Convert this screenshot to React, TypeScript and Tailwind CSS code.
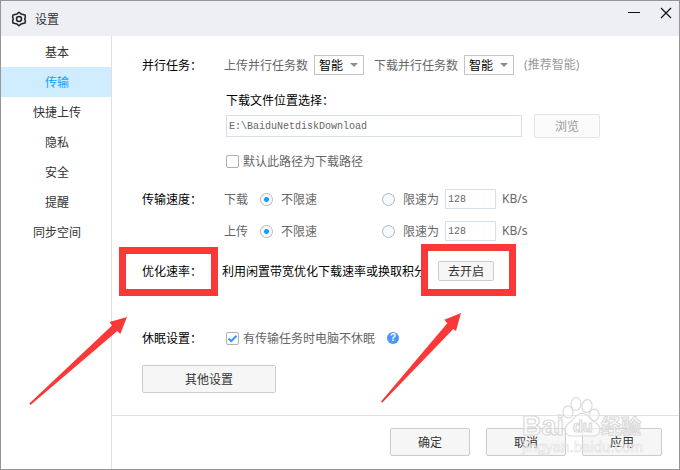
import { useState, type ReactNode } from "react";

const tabs = ["基本", "传输", "快捷上传", "隐私", "安全", "提醒", "同步空间"];

function GearIcon() {
  return (
    <svg viewBox="0 0 16 16" className="size-4" fill="none" stroke="#222" strokeWidth="1.5" strokeLinejoin="round">
      <path d="M8 1.2 L10 2.9 L14 3.9 L14.4 6 L13.7 8 L14.4 10 L14 12.1 L10 13.1 L8 14.8 L6 13.1 L2 12.1 L1.6 10 L2.3 8 L1.6 6 L2 3.9 L6 2.9 Z" />
      <circle cx="8" cy="8" r="2.5" />
    </svg>
  );
}

function TaskSelect({ id, label }: { id: string; label: string }) {
  return (
    <div className="flex items-center gap-1.5">
      <label htmlFor={id} className="text-[#666]">{label}</label>
      <div className="relative flex">
        <select id={id} className="h-5 w-[50px] appearance-none border border-[#c4c4c4] bg-white pl-1 text-xs leading-4 text-black outline-none">
          <option>智能</option>
          <option>1</option>
          <option>3</option>
          <option>5</option>
        </select>
        <svg viewBox="0 0 8 4" className="pointer-events-none absolute top-2 right-1.5 h-1 w-2">
          <path d="M0 0H8L4 4Z" fill="#8f8f8f" />
        </svg>
      </div>
    </div>
  );
}

function Check({ label, initial }: { label: string; initial: boolean }) {
  const [on, setOn] = useState(initial);
  return (
    <label className="flex items-center gap-1 text-[#666]">
      <span className="relative flex">
        <input
          type="checkbox"
          checked={on}
          onChange={(e) => setOn(e.target.checked)}
          className="size-[13px] appearance-none rounded-xs border border-[#b0b0b0] bg-white"
        />
        {on && (
          <svg viewBox="0 0 13 13" className="pointer-events-none absolute inset-0 size-[13px]" fill="none" stroke="#2b98f5" strokeWidth="2">
            <path d="M2.5 6.5 L5.3 9 L10.5 3.8" />
          </svg>
        )}
      </span>
      {label}
    </label>
  );
}

function Radio({ name, label, checked, onChange }: { name: string; label: string; checked: boolean; onChange: () => void }) {
  return (
    <label className="flex items-center gap-2">
      <input
        type="radio"
        name={name}
        checked={checked}
        onChange={onChange}
        className="size-[13px] appearance-none rounded-full border border-[#b4b8be] bg-[#f6f9fe] bg-[radial-gradient(circle,#0d9ffb_2px,transparent_3px)] not-checked:bg-none"
      />
      {label}
    </label>
  );
}

function SpeedRow({ name, label }: { name: string; label: string }) {
  const [limited, setLimited] = useState(false);
  return (
    <div className="flex h-5 items-center text-[#666]" role="radiogroup" aria-label={label}>
      <span className="w-9 shrink-0">{label}</span>
      <div className="w-[122px] shrink-0">
        <Radio name={name} label="不限速" checked={!limited} onChange={() => setLimited(false)} />
      </div>
      <Radio name={name} label="限速为" checked={limited} onChange={() => setLimited(true)} />
      <input
        aria-label={`${label}限速`}
        defaultValue="128"
        className="ml-1.5 h-5 w-[51px] border border-[#d5dfeb] bg-white px-0.5 font-['Liberation_Mono',monospace] text-[10px] text-[#666] outline-none"
      />
      <span className="ml-1.5 font-['Noto_Sans',sans-serif]">KB/s</span>
    </div>
  );
}

function Row({ label, className, children }: { label: string; className: string; children: ReactNode }) {
  return (
    <div className={`flex ${className}`}>
      <h2 className="w-[82px] shrink-0 leading-5">{label}</h2>
      <div className="min-w-0 grow">{children}</div>
    </div>
  );
}

const button = "rounded-xs border border-[#cccccc] bg-[#f6f6f6] text-[#333]";

function Annotations() {
  return (
    <div className="pointer-events-none absolute -inset-px">
      <div className="absolute top-[247px] left-[119px] h-[49px] w-[99px] border-7 border-[#fb3838]" />
      <div className="absolute top-[244px] left-[421px] h-[52px] w-[95px] border-7 border-[#fb3838]" />
      <svg viewBox="0 0 680 470" className="absolute top-0 left-0 h-[470px] w-[680px]" fill="#fb3838">
        <path d="M127 317 L109.5 322 L112 325.5 L29.3 403.6 L30.5 405 L117.3 331 L120.3 334 Z" />
        <path d="M461 313 L444.3 319.8 L447.3 323.3 L381 401.5 L382.2 402.7 L453.3 329 L456 331 Z" />
      </svg>
    </div>
  );
}

function Watermark() {
  return (
    <div className="pointer-events-none absolute right-[30px] bottom-2 h-[66px] w-[130px]">
      <svg viewBox="0 0 130 66" className="absolute inset-0" fill="#fff" fillOpacity="0.5" stroke="#dadada" strokeWidth="1.2">
        <ellipse cx="49" cy="17" rx="5" ry="6" transform="rotate(-12 49 17)" />
        <ellipse cx="57" cy="9" rx="5" ry="6.5" />
        <ellipse cx="68" cy="11" rx="5" ry="6.5" transform="rotate(12 68 11)" />
        <ellipse cx="75" cy="20" rx="5" ry="6" transform="rotate(20 75 20)" />
        <path d="M63 18.5 C70 18.5 72 25 77 28 C83 32 82 41 74 41 H53 C45 41 44 32 50 28 C55 25 56 18.5 63 18.5 Z" />
        <g fontFamily="Liberation Sans, Noto Sans CJK SC, sans-serif" fontWeight="700">
          <text x="3" y="40" fontSize="27">Bai</text>
          <text x="54" y="37" fontSize="16">du</text>
          <text x="82" y="39" fontSize="20">经验</text>
          <text x="3" y="57" fontSize="15" stroke="#e2e2e2" strokeWidth="0.6" fontWeight="400">jingyan.baidu.com</text>
        </g>
      </svg>
    </div>
  );
}

export default function App() {
  const [tab, setTab] = useState("传输");
  return (
    <div className="relative flex min-h-screen flex-col border border-[#969696] bg-white font-['Noto_Sans_CJK_SC',sans-serif] text-xs text-black">
      <header className="flex h-[35px] items-center bg-[#eeeff5] pl-2.5">
        <GearIcon />
        <h1 className="ml-2 grow text-[#333]">设置</h1>
        <div className="flex gap-5 self-start pt-1.5 pr-[7px]">
          <button aria-label="最小化">
            <svg viewBox="0 0 12 12" className="size-3" stroke="#111"><path d="M0 5.5H12" /></svg>
          </button>
          <button aria-label="关闭">
            <svg viewBox="0 0 12 12" className="size-3" stroke="#111" strokeWidth="1.2"><path d="M1 1L11 11M11 1L1 11" /></svg>
          </button>
        </div>
      </header>
      <div className="flex grow">
        <nav className="flex w-[111px] shrink-0 flex-col border-r border-[#e0e0e0] pt-px">
          {tabs.map((t) => (
            <button
              key={t}
              onClick={() => setTab(t)}
              className={`h-[30px] pl-0.5 ${t === tab ? "bg-[#d0ecff] text-[#0da2ff]" : "text-[#333]"}`}
            >
              {t}
            </button>
          ))}
        </nav>
        <div className="flex min-w-0 grow flex-col">
          <main className="grow pt-[19px] pl-[30px]">
            <Row label="并行任务：" className="">
              <div className="flex items-center gap-2.5">
                <TaskSelect id="up" label="上传并行任务数" />
                <TaskSelect id="down" label="下载并行任务数" />
                <span className="font-['Noto_Sans','Noto_Sans_CJK_SC',sans-serif] text-[#999]">(推荐智能)</span>
              </div>
              <div className="mt-[15px] pl-0.5">
                <label htmlFor="path" className="block leading-5">下载文件位置选择：</label>
                <div className="mt-1 flex items-center gap-3">
                  <input
                    id="path"
                    defaultValue="E:\BaiduNetdiskDownload"
                    className="h-[22px] w-[296px] border border-[#d5dfeb] bg-white px-0.5 font-['Liberation_Mono',monospace] text-[10px] text-[#666] outline-none"
                  />
                  <button disabled className="h-6 w-[66px] rounded-xs border border-[#e4e4e4] bg-[#fbfbfb] text-[#999]">浏览</button>
                </div>
                <div className="mt-[15px]">
                  <Check label="默认此路径为下载路径" initial={false} />
                </div>
              </div>
            </Row>
            <Row label="传输速度：" className="mt-5">
              <div className="flex flex-col gap-3">
                <SpeedRow name="download" label="下载" />
                <SpeedRow name="upload" label="上传" />
              </div>
            </Row>
            <Row label="优化速率：" className="mt-5">
              <div className="-ml-0.5 flex items-center">
                <p className="w-[204px] overflow-hidden whitespace-nowrap">利用闲置带宽优化下载速率或换取积分</p>
                <button className={`ml-3 h-5 w-14 ${button}`}>去开启</button>
              </div>
            </Row>
            <Row label="休眠设置：" className="mt-[47px]">
              <div className="flex h-5 items-center gap-3 pl-0.5">
                <Check label="有传输任务时电脑不休眠" initial={true} />
                <button aria-label="帮助" className="flex size-3 items-center justify-center rounded-full bg-[#4a97fb] font-['Liberation_Sans',sans-serif] text-[10px] font-bold text-white">?</button>
              </div>
            </Row>
            <button className={`mt-[17px] h-7 w-[134px] ${button}`}>其他设置</button>
          </main>
          <footer className="flex justify-end gap-4 border-t border-[#e0e0e0] pt-3 pr-[17px] pb-[13px]">
            <button className={`h-7 w-20 ${button}`}>确定</button>
            <button className={`h-7 w-20 ${button}`}>取消</button>
            <button className={`h-7 w-20 ${button}`}>应用</button>
          </footer>
        </div>
      </div>
      <Annotations />
      <Watermark />
    </div>
  );
}
